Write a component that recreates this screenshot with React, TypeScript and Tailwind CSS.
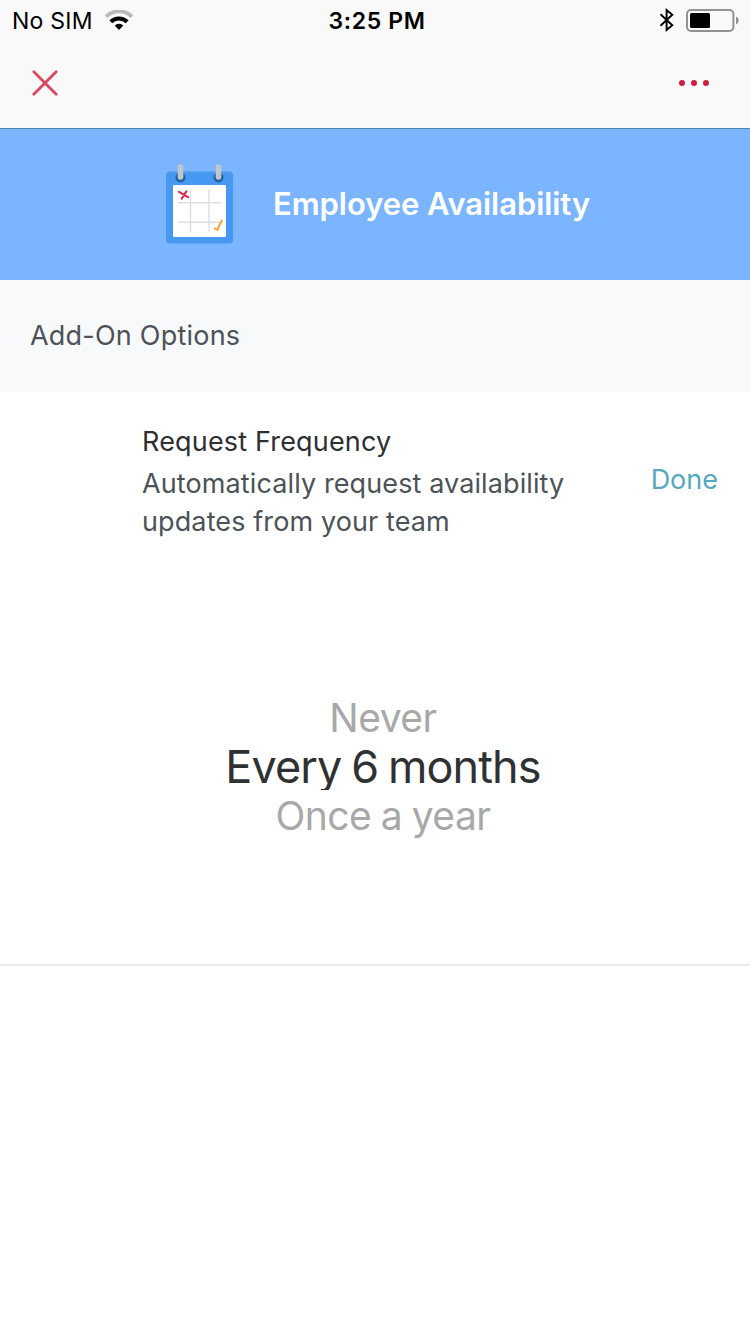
import { useState } from 'react';

const frequencies = ['Never', 'Every 6 months', 'Once a year'];

function StatusBar() {
  return (
    <div className="grid grid-cols-3 items-center h-10 pl-3 pr-[11px] text-[23px] text-black">
      <div className="flex items-center gap-3">
        <span className="tracking-[0.25px] pt-0.5">No SIM</span>
        <svg className="w-7 h-5" viewBox="0 0 28 20" fill="none">
          <path d="M1 6.6a18.5 18.5 0 0 1 26 0" stroke="#bababa" strokeWidth={3.8} />
          <path d="M5.8 11.8a11.8 11.8 0 0 1 16.4 0" stroke="#000" strokeWidth={4} />
          <path d="M9.7 15.6a6.2 6.2 0 0 1 8.6 0L14 20z" fill="#000" />
        </svg>
      </div>
      <span className="text-center font-semibold tracking-[0.65px] pl-[3px] pt-0.5">3:25 PM</span>
      <div className="flex items-center justify-end gap-[11px]">
        <svg className="w-4 h-6" viewBox="0 0 16 24" fill="none" stroke="#000" strokeWidth={1.9}>
          <path d="M1.5 6.2l11.8 11.1L7.6 22V2l5.7 4.8L1.5 17.8" />
        </svg>
        <svg className="w-[53px] h-6" viewBox="0 0 53 24" fill="none">
          <rect x={1} y={2} width={46.4} height={21} rx={4} stroke="#929292" strokeWidth={2} />
          <rect x={4} y={5} width={20} height={15} rx={1.5} fill="#000" />
          <path d="M50 8.6c3.5 1.4 3.5 6.4 0 7.8z" fill="#929292" />
        </svg>
      </div>
    </div>
  );
}

function NavBar() {
  return (
    <div className="flex items-center justify-between h-[88px] pl-8 pr-[41px]">
      <button aria-label="Close">
        <svg className="w-[26px] h-[26px] -mt-0.5" viewBox="0 0 26 26" stroke="#d9485f" strokeWidth={2.8} strokeLinecap="round">
          <path d="M1.8 1.8l22.4 22.4M24.2 1.8L1.8 24.2" />
        </svg>
      </button>
      <button aria-label="More" className="flex gap-1.5 -mt-0.5">
        <span className="size-1.5 rounded-full bg-[#cb1f3f]" />
        <span className="size-1.5 rounded-full bg-[#cb1f3f]" />
        <span className="size-1.5 rounded-full bg-[#cb1f3f]" />
      </button>
    </div>
  );
}

function CalendarIcon() {
  return (
    <svg className="w-[68px] h-20 -mt-0.5" viewBox="0 0 68 80" fill="none">
      <rect x={0} y={7.5} width={67} height={72} rx={4} fill="#4698f2" />
      <circle cx={14.5} cy={13.5} r={5} fill="#2161a5" />
      <circle cx={52.5} cy={13.5} r={5} fill="#2161a5" />
      <path d="M14.5 3v10M52.5 3v10" stroke="#c1c6ca" strokeWidth={5.6} strokeLinecap="round" />
      <rect x={7} y={21} width={53} height={52} rx={1} fill="#fff" />
      <path d="M24.5 25.5v42M43 25.5v42M12 38.7h43M12 58.3h43" stroke="#d9dee3" strokeWidth={1.4} />
      <path d="M13 27.8l9 5.4M20.4 27.4l-4.8 7.2" stroke="#d4284a" strokeWidth={2} strokeLinecap="round" />
      <path d="M48.8 64.5l2.6 1.4c1.2-3.6 2.6-6.2 4.4-9.2" stroke="#f5a53f" strokeWidth={2.1} strokeLinecap="round" strokeLinejoin="round" />
    </svg>
  );
}

export default function App() {
  const [selected, setSelected] = useState(1);

  return (
    <div className="w-[750px] h-[1334px] overflow-hidden bg-white font-['Inter',sans-serif]">
      <header className="h-[129px] bg-[#f9f9f9] border-b border-[#5681b3]">
        <StatusBar />
        <NavBar />
      </header>

      <div className="flex items-center gap-[39px] h-[151px] pl-[166px] bg-[#7cb5ff]">
        <CalendarIcon />
        <h1 className="text-[31px] font-semibold text-white tracking-[-0.06px] whitespace-nowrap">Employee Availability</h1>
      </div>

      <div className="flex items-center h-28 px-[30px] bg-[#f8f9fb]">
        <h2 className="text-[27px] text-[#4c5257] tracking-[0.22px]">Add-On Options</h2>
      </div>

      <section className="h-[574px] pt-[31px] border-b-2 border-[#e6ebea]">
        <div className="flex justify-between pl-[142px] pr-8 text-[27px] leading-[38px]">
          <div className="w-[480px]">
            <h3 className="text-[#2d3033] tracking-[0.17px]">Request Frequency</h3>
            <p className="mt-1 text-[#4c5257] tracking-[0.11px]">
              Automatically request availability
              <br />
              updates from your team
            </p>
          </div>
          <button className="self-start mt-[38px] text-[#55a8bd]">Done</button>
        </div>

        {/* Frequency picker */}
        <div className="flex flex-col items-center w-[480px] ml-[143px] mt-[151px]">
          {frequencies.map((label, i) => (
            <button
              key={label}
              onClick={() => setSelected(i)}
              className={
                i === selected
                  ? 'h-12 leading-[50px] overflow-hidden whitespace-nowrap text-[45px] text-[#303132] tracking-[-0.9px] [word-spacing:-2px]'
                  : 'h-[50px] leading-[51px] whitespace-nowrap text-[39px] text-[#a8a8a8] tracking-[-0.5px] [word-spacing:-1px]'
              }
            >
              {label}
            </button>
          ))}
        </div>
      </section>
    </div>
  );
}
